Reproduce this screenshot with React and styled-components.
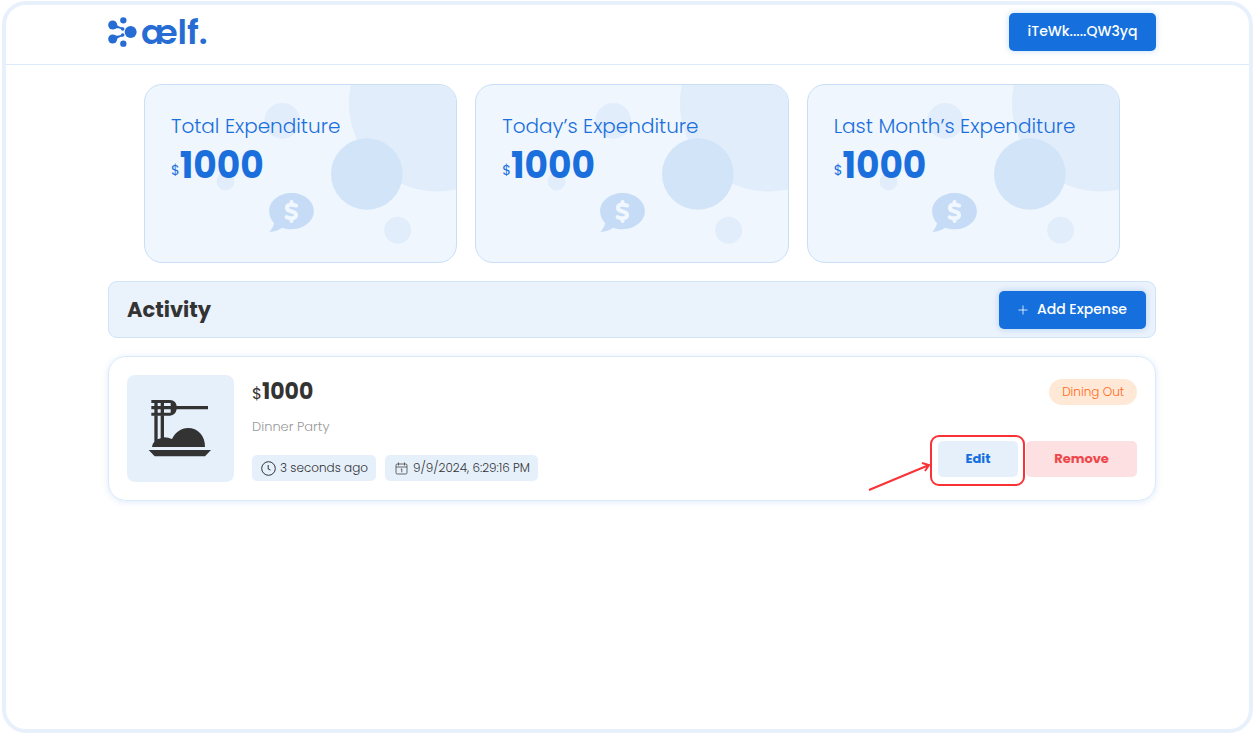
import React from "react";
import styled, { createGlobalStyle } from "styled-components";

const GlobalStyle = createGlobalStyle`
  *, *::before, *::after { box-sizing: border-box; }
  body {
    margin: 0;
    background: #fff;
    color: #333;
    font-family: Poppins, Inter, "Liberation Sans", sans-serif;
  }
  h1, h2, p { margin: 0; }
  button { font: inherit; border: 0; cursor: pointer; }
`;

const Frame = styled.div`
  min-height: calc(100vh - 1px);
  margin: 1px 4px 0 2px;
  border: 4px solid #e8f0fb;
  border-radius: 24px;
`;

const Header = styled.header`
  display: flex;
  align-items: center;
  justify-content: space-between;
  height: 60px;
  padding: 0 93px 6px 102px;
  border-bottom: 1px solid #dcebfb;
`;

const Logo = styled.a`
  display: flex;
  align-items: center;
  gap: 4px;
  color: #266cd3;
  text-decoration: none;
`;

const Wordmark = styled.span`
  font-size: 34px;
  font-weight: 600;
  line-height: 34px;
`;

const PrimaryButton = styled.button`
  display: flex;
  align-items: center;
  justify-content: center;
  gap: 9px;
  min-width: 147px;
  height: 38px;
  padding: 0 16px;
  border-radius: 5px;
  background: #1570de;
  color: #fff;
  font-size: 14px;
  font-weight: 500;
  white-space: nowrap;
  box-shadow: 0 0 6px rgba(21, 112, 222, 0.25);
`;

const Main = styled.main`
  display: flex;
  flex-direction: column;
  gap: 18px;
  padding: 19px 93px 18px 102px;
`;

const Stats = styled.section`
  display: grid;
  grid-template-columns: repeat(3, 1fr);
  gap: 18px;
  padding: 0 36px;
`;

const StatCard = styled.article`
  position: relative;
  overflow: hidden;
  min-height: 179px;
  padding: 26px;
  border: 1px solid #c9dff6;
  border-radius: 18px;
  background: #eff6fe;
  color: #1a6fdc;
`;

const StatArt = styled.svg`
  position: absolute;
  inset: 0;
  width: 100%;
  height: 100%;
`;

const StatTitle = styled.h2`
  position: relative;
  font-size: 20px;
  font-weight: 300;
  line-height: 30px;
`;

const Amount = styled.p`
  position: relative;
  font-size: ${(p) => (p.$large ? 36 : 22)}px;
  font-weight: 700;
  line-height: ${(p) => (p.$large ? 50 : 34)}px;
`;

const Currency = styled.span`
  font-size: ${(p) => (p.$large ? 14 : 16)}px;
  font-weight: 400;
  line-height: 1;
  vertical-align: ${(p) => (p.$large ? 3 : 0)}px;
`;

const ActivityBar = styled.section`
  display: flex;
  align-items: center;
  justify-content: space-between;
  height: 57px;
  padding: 0 9px 0 18px;
  border: 1px solid #d0e3f8;
  border-radius: 9px;
  background: #eaf2fc;
`;

const ActivityTitle = styled.h1`
  font-size: 21px;
  font-weight: 700;
  line-height: 30px;
`;

const Expense = styled.article`
  display: flex;
  gap: 18px;
  padding: 18px;
  border: 1px solid #dbeafb;
  border-radius: 18px;
  background: #fff;
  box-shadow: 0 1px 7px rgba(21, 112, 222, 0.14);
`;

const Thumb = styled.div`
  flex: none;
  width: 107px;
  height: 107px;
  border-radius: 8px;
  background: #e6f0fb;
`;

const Details = styled.div`
  display: flex;
  flex: 1;
  flex-direction: column;
  gap: 8px;
`;

const Note = styled.p`
  color: #999;
  font-size: 13px;
  font-weight: 300;
  line-height: 20px;
`;

const Chips = styled.div`
  display: flex;
  gap: 9px;
  margin: auto 0 1px;
`;

const Chip = styled.span`
  display: flex;
  align-items: center;
  gap: 4px;
  height: 26px;
  padding: 0 8px 0 9px;
  border-radius: 5px;
  background: #e6f0fb;
  font-size: 12px;
  font-weight: 300;
  white-space: nowrap;
`;

const Side = styled.div`
  display: flex;
  flex-direction: column;
  align-items: flex-end;
  justify-content: space-between;
  padding: 4px 0 5px;
`;

const Category = styled.span`
  height: 26px;
  padding: 0 13px;
  border-radius: 13px;
  background: #ffe9d6;
  color: #ff6a1a;
  font-size: 12px;
  font-weight: 300;
  line-height: 26px;
`;

const Actions = styled.div`
  display: flex;
  gap: 8px;
`;

const ActionButton = styled.button`
  min-width: ${(p) => (p.$danger ? 111 : 80)}px;
  height: 36px;
  border-radius: 5px;
  background: ${(p) => (p.$danger ? "#fde0e1" : "#e6f0fb")};
  color: ${(p) => (p.$danger ? "#ee474b" : "#1570de")};
  font-size: 13px;
  font-weight: 700;
`;

const Highlight = styled.div`
  position: relative;
  display: flex;

  &::after {
    content: "";
    position: absolute;
    inset: -6px -7px -9px -8px;
    border: 2px solid #fa3236;
    border-radius: 9px;
    pointer-events: none;
  }
`;

const Arrow = styled.svg`
  position: absolute;
  top: 19px;
  right: 87px;
`;

const AelfMark = () => (
  <svg width="29" height="30" viewBox="323 49 87 90" fill="currentColor" aria-hidden="true">
    <circle cx="391" cy="94" r="18" />
    <circle cx="337" cy="73" r="13.5" />
    <circle cx="337" cy="115" r="13.5" />
    <circle cx="369" cy="59" r="9.5" />
    <circle cx="369" cy="129" r="9.5" />
    <circle cx="367" cy="85" r="5.5" />
    <circle cx="367" cy="103" r="5.5" />
    <path d="M346 66c3 9 10 12 22 15v6c-10-4-19-6-29-2zM346 122c3-9 10-12 22-15v-6c-10 4-19 6-29 2z" />
  </svg>
);

const CardArt = () => (
  <StatArt viewBox="0 0 313 179" preserveAspectRatio="xMaxYMin slice" aria-hidden="true">
    <g fill="#e1edfb">
      <circle cx="294" cy="18" r="89" />
      <circle cx="138" cy="36" r="18" />
      <circle cx="81" cy="97" r="9" />
      <circle cx="254" cy="146" r="13.5" />
    </g>
    <circle cx="223" cy="89.5" r="36" fill="#d1e4f8" />
    <path
      fill="#c6dcf6"
      d="M147.3 108.5c12.5 0 22.5 8.2 22.5 18.3s-10 18.3-22.5 18.3c-3.4 0-6.500-.6-9.300-1.600-3.200 2.300-8 4.200-13 4.200 2.300-2.500 4.200-5.500 4.800-8.700-3.100-3.200-5-7.500-5-12.200 0-10.100 10-18.300 22.500-18.300z"
    />
    <path
      fill="none"
      stroke="#f1f7fe"
      strokeWidth="4"
      strokeLinecap="round"
      strokeLinejoin="round"
      d="M147.300 117.500v3M147.300 134v2.800M152 121.200c-2-.7-3.500-.9-5-.9-5.500 0-5.500 5.200-1.300 6.300l3 .9c4.600 1.300 4.200 6.500-1.300 6.500-2 0-3.500-.4-5-1.100"
    />
  </StatArt>
);

const FoodIcon = () => (
  <svg width="107" height="107" viewBox="51 75 321 321" fill="#333" role="img" aria-label="Dining">
    <path d="M124 150H180Q198 151 200 168H294V178H200Q197 195 180 197H124V188H133V178H124V168H133V159H124ZM143 159V168H152V159ZM162 159V168H182V159ZM143 178V188H152V178ZM162 178V188H182V178Z" fillRule="evenodd" />
    <path d="M133 196H143V268L152 265V196H162V262Q175 262 186 267C197 246 213 234 234 234C263 234 286 257 285 291H126Q128 279 133 275Z" />
    <path d="M116 300H303L285 319H134Z" />
  </svg>
);

const ClockIcon = () => (
  <svg width="15" height="15" viewBox="0 0 15 15" fill="none" stroke="#333" aria-hidden="true">
    <circle cx="7.500" cy="7.500" r="6.800" />
    <path d="M7.200 4v4l2.300 1" />
  </svg>
);

const CalendarIcon = () => (
  <svg width="15" height="15" viewBox="0 0 15 15" fill="none" stroke="#444" strokeWidth=".8" aria-hidden="true">
    <rect x="2" y="3" width="11" height="10" rx="1.200" />
    <path d="M2 6h11M4.500 1.500v3M10.500 1.500v3M6.800 8.300l1-.5v3.500" />
  </svg>
);

const PlusIcon = () => (
  <svg width="10" height="10" viewBox="0 0 10 10" stroke="#fff" strokeWidth=".8" aria-hidden="true">
    <path d="M5 .5v9M.5 5h9" />
  </svg>
);

const stats = ["Total Expenditure", "Today’s Expenditure", "Last Month’s Expenditure"];

export default function App() {
  return (
    <>
      <GlobalStyle />
      <Frame>
        <Header>
          <Logo href="#" aria-label="aelf home">
            <AelfMark />
            <Wordmark>ælf.</Wordmark>
          </Logo>
          <PrimaryButton type="button">iTeWk.....QW3yq</PrimaryButton>
        </Header>
        <Main>
          <Stats>
            {stats.map((title) => (
              <StatCard key={title}>
                <CardArt />
                <StatTitle>{title}</StatTitle>
                <Amount $large>
                  <Currency $large>$</Currency>1000
                </Amount>
              </StatCard>
            ))}
          </Stats>
          <ActivityBar>
            <ActivityTitle>Activity</ActivityTitle>
            <PrimaryButton type="button">
              <PlusIcon />
              Add Expense
            </PrimaryButton>
          </ActivityBar>
          <Expense>
            <Thumb>
              <FoodIcon />
            </Thumb>
            <Details>
              <Amount>
                <Currency>$</Currency>1000
              </Amount>
              <Note>Dinner Party</Note>
              <Chips>
                <Chip>
                  <ClockIcon />3 seconds ago
                </Chip>
                <Chip>
                  <CalendarIcon />9/9/2024, 6:29:16 PM
                </Chip>
              </Chips>
            </Details>
            <Side>
              <Category>Dining Out</Category>
              <Actions>
                <Highlight>
                  <ActionButton type="button">Edit</ActionButton>
                  <Arrow width="63" height="32" viewBox="0 0 63 32" fill="none" stroke="#fa3236" strokeWidth="2" aria-hidden="true">
                    <path d="M1 30L61 5M54 3l7 2-4 6" />
                  </Arrow>
                </Highlight>
                <ActionButton type="button" $danger>Remove</ActionButton>
              </Actions>
            </Side>
          </Expense>
        </Main>
      </Frame>
    </>
  );
}
